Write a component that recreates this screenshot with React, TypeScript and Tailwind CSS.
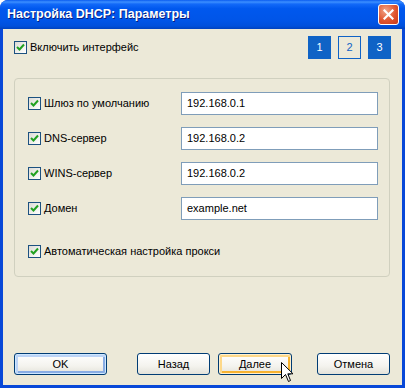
import { useState } from 'react';

const font = { fontFamily: '"Liberation Sans", Arial, sans-serif' };

const CheckBox = ({ checked }: { checked: boolean }) => (
  <span className="inline-flex w-[13px] h-[13px] shrink-0 items-center justify-center border border-[#1C5180] bg-[linear-gradient(135deg,#DCDBD5,#FFFFFF)]">
    {checked && (
      <svg width="9" height="9" viewBox="0 0 9 9">
        <path d="M1 4 L3.5 6.5 L8 1.5" stroke="#21A121" strokeWidth="2" fill="none" />
      </svg>
    )}
  </span>
);

const CheckLabel = ({ label }: { label: string }) => {
  const [checked, setChecked] = useState(true);
  return (
    <label className="flex items-center gap-[3px] cursor-default select-none" onClick={() => setChecked(!checked)}>
      <CheckBox checked={checked} />
      <span className="text-[11px] text-black leading-none">{label}</span>
    </label>
  );
};

const XpButton = ({
  label,
  width,
  variant,
}: {
  label: string;
  width: string;
  variant?: 'default' | 'hover';
}) => {
  const glow =
    variant === 'default'
      ? 'shadow-[inset_0_0_0_1px_#CEE7FF,inset_1px_1px_0_2px_#BCD4F6,inset_-1px_-1px_0_2px_#89ADE4]'
      : variant === 'hover'
        ? 'shadow-[inset_0_0_0_1px_#FFF0CF,inset_1px_1px_0_2px_#FDD889,inset_-1px_-1px_0_2px_#F8B330]'
        : '';
  return (
    <button
      className={`${width} h-[22px] rounded-[3px] border border-[#003C74] bg-[linear-gradient(to_bottom,#FFFFFF,#F4F3EE_60%,#E3E2DA)] text-[11px] text-black ${glow}`}
    >
      {label}
    </button>
  );
};

const rows = [
  { label: 'Шлюз по умолчанию', value: '192.168.0.1' },
  { label: 'DNS-сервер', value: '192.168.0.2' },
  { label: 'WINS-сервер', value: '192.168.0.2' },
  { label: 'Домен', value: 'example.net' },
];

export default function App() {
  const [step, setStep] = useState(2);
  return (
    <div
      className="relative w-[405px] h-[388px] flex flex-col rounded-t-[8px] bg-[#0848D8] overflow-hidden"
      style={font}
    >
      {/* title bar */}
      <div className="h-[29px] shrink-0 flex items-center justify-between pl-[7px] pr-[6px] bg-[linear-gradient(to_bottom,#0A5CF0_0%,#3C8FFF_7%,#1269F8_14%,#0058EE_30%,#0055E8_70%,#0050DC_90%,#0042BE_100%)]">
        <span className="text-white font-bold text-[12.5px] [text-shadow:1px_1px_0_#0A1E80]">
          Настройка DHCP: Параметры
        </span>
        <button className="w-[21px] h-[21px] rounded-[3px] border border-white flex items-center justify-center bg-[radial-gradient(circle_at_35%_30%,#F0A488,#E0552F_55%,#C8391A)]">
          <svg width="11" height="11" viewBox="0 0 11 11">
            <path d="M1.5 1.5 L9.5 9.5 M9.5 1.5 L1.5 9.5" stroke="white" strokeWidth="2.2" strokeLinecap="square" />
          </svg>
        </button>
      </div>

      {/* client area */}
      <div className="flex-1 mx-[3px] mb-[3px] bg-[#ECE9D8] flex flex-col px-[11px]">
        <div className="flex items-center justify-between mt-[7px] h-[23px]">
          <CheckLabel label="Включить интерфейс" />
          <div className="flex gap-[7px]">
            {[1, 2, 3].map((n) => (
              <button
                key={n}
                onClick={() => setStep(n)}
                className={
                  n === step
                    ? 'w-[23px] h-[23px] border border-[#0F63C6] text-[#0F63C6] text-[11px] flex items-center justify-center'
                    : 'w-[23px] h-[23px] bg-[#0F63C6] text-white text-[11px] flex items-center justify-center'
                }
              >
                {n}
              </button>
            ))}
          </div>
        </div>

        <div className="mt-[19px] mr-[1px] h-[199px] rounded-[4px] border border-[#D0D0BF] pl-[13px] pr-[11px] pt-[13px]">
          <div className="grid grid-cols-[153px_1fr] gap-y-[12px] items-center">
            {rows.map((r) => (
              <div key={r.label} className="contents">
                <CheckLabel label={r.label} />
                <div className="h-[23px] border border-[#7F9DB9] bg-white flex items-center px-[5px] text-[11px] text-black">
                  {r.value}
                </div>
              </div>
            ))}
          </div>
          <div className="mt-[25px]">
            <CheckLabel label="Автоматическая настройка прокси" />
          </div>
        </div>

        <div className="mt-[76px] flex items-center">
          <XpButton label="OK" width="w-[93px]" variant="default" />
          <XpButton label="Назад" width="w-[73px] ml-[30px]" />
          <XpButton label="Далее" width="w-[74px] ml-[8px]" variant="hover" />
          <XpButton label="Отмена" width="w-[73px] ml-[25px]" />
        </div>
      </div>

      {/* mouse cursor */}
      <svg className="absolute left-[281px] top-[362px]" width="13" height="21" viewBox="0 0 13 21">
        <path
          d="M0.5 0.5 L0.5 16.5 L4.5 12.5 L7.5 19.5 L9.5 18.5 L6.8 11.8 L12 11.8 Z"
          fill="white"
          stroke="black"
          strokeWidth="1"
          strokeLinejoin="miter"
        />
      </svg>
    </div>
  );
}
